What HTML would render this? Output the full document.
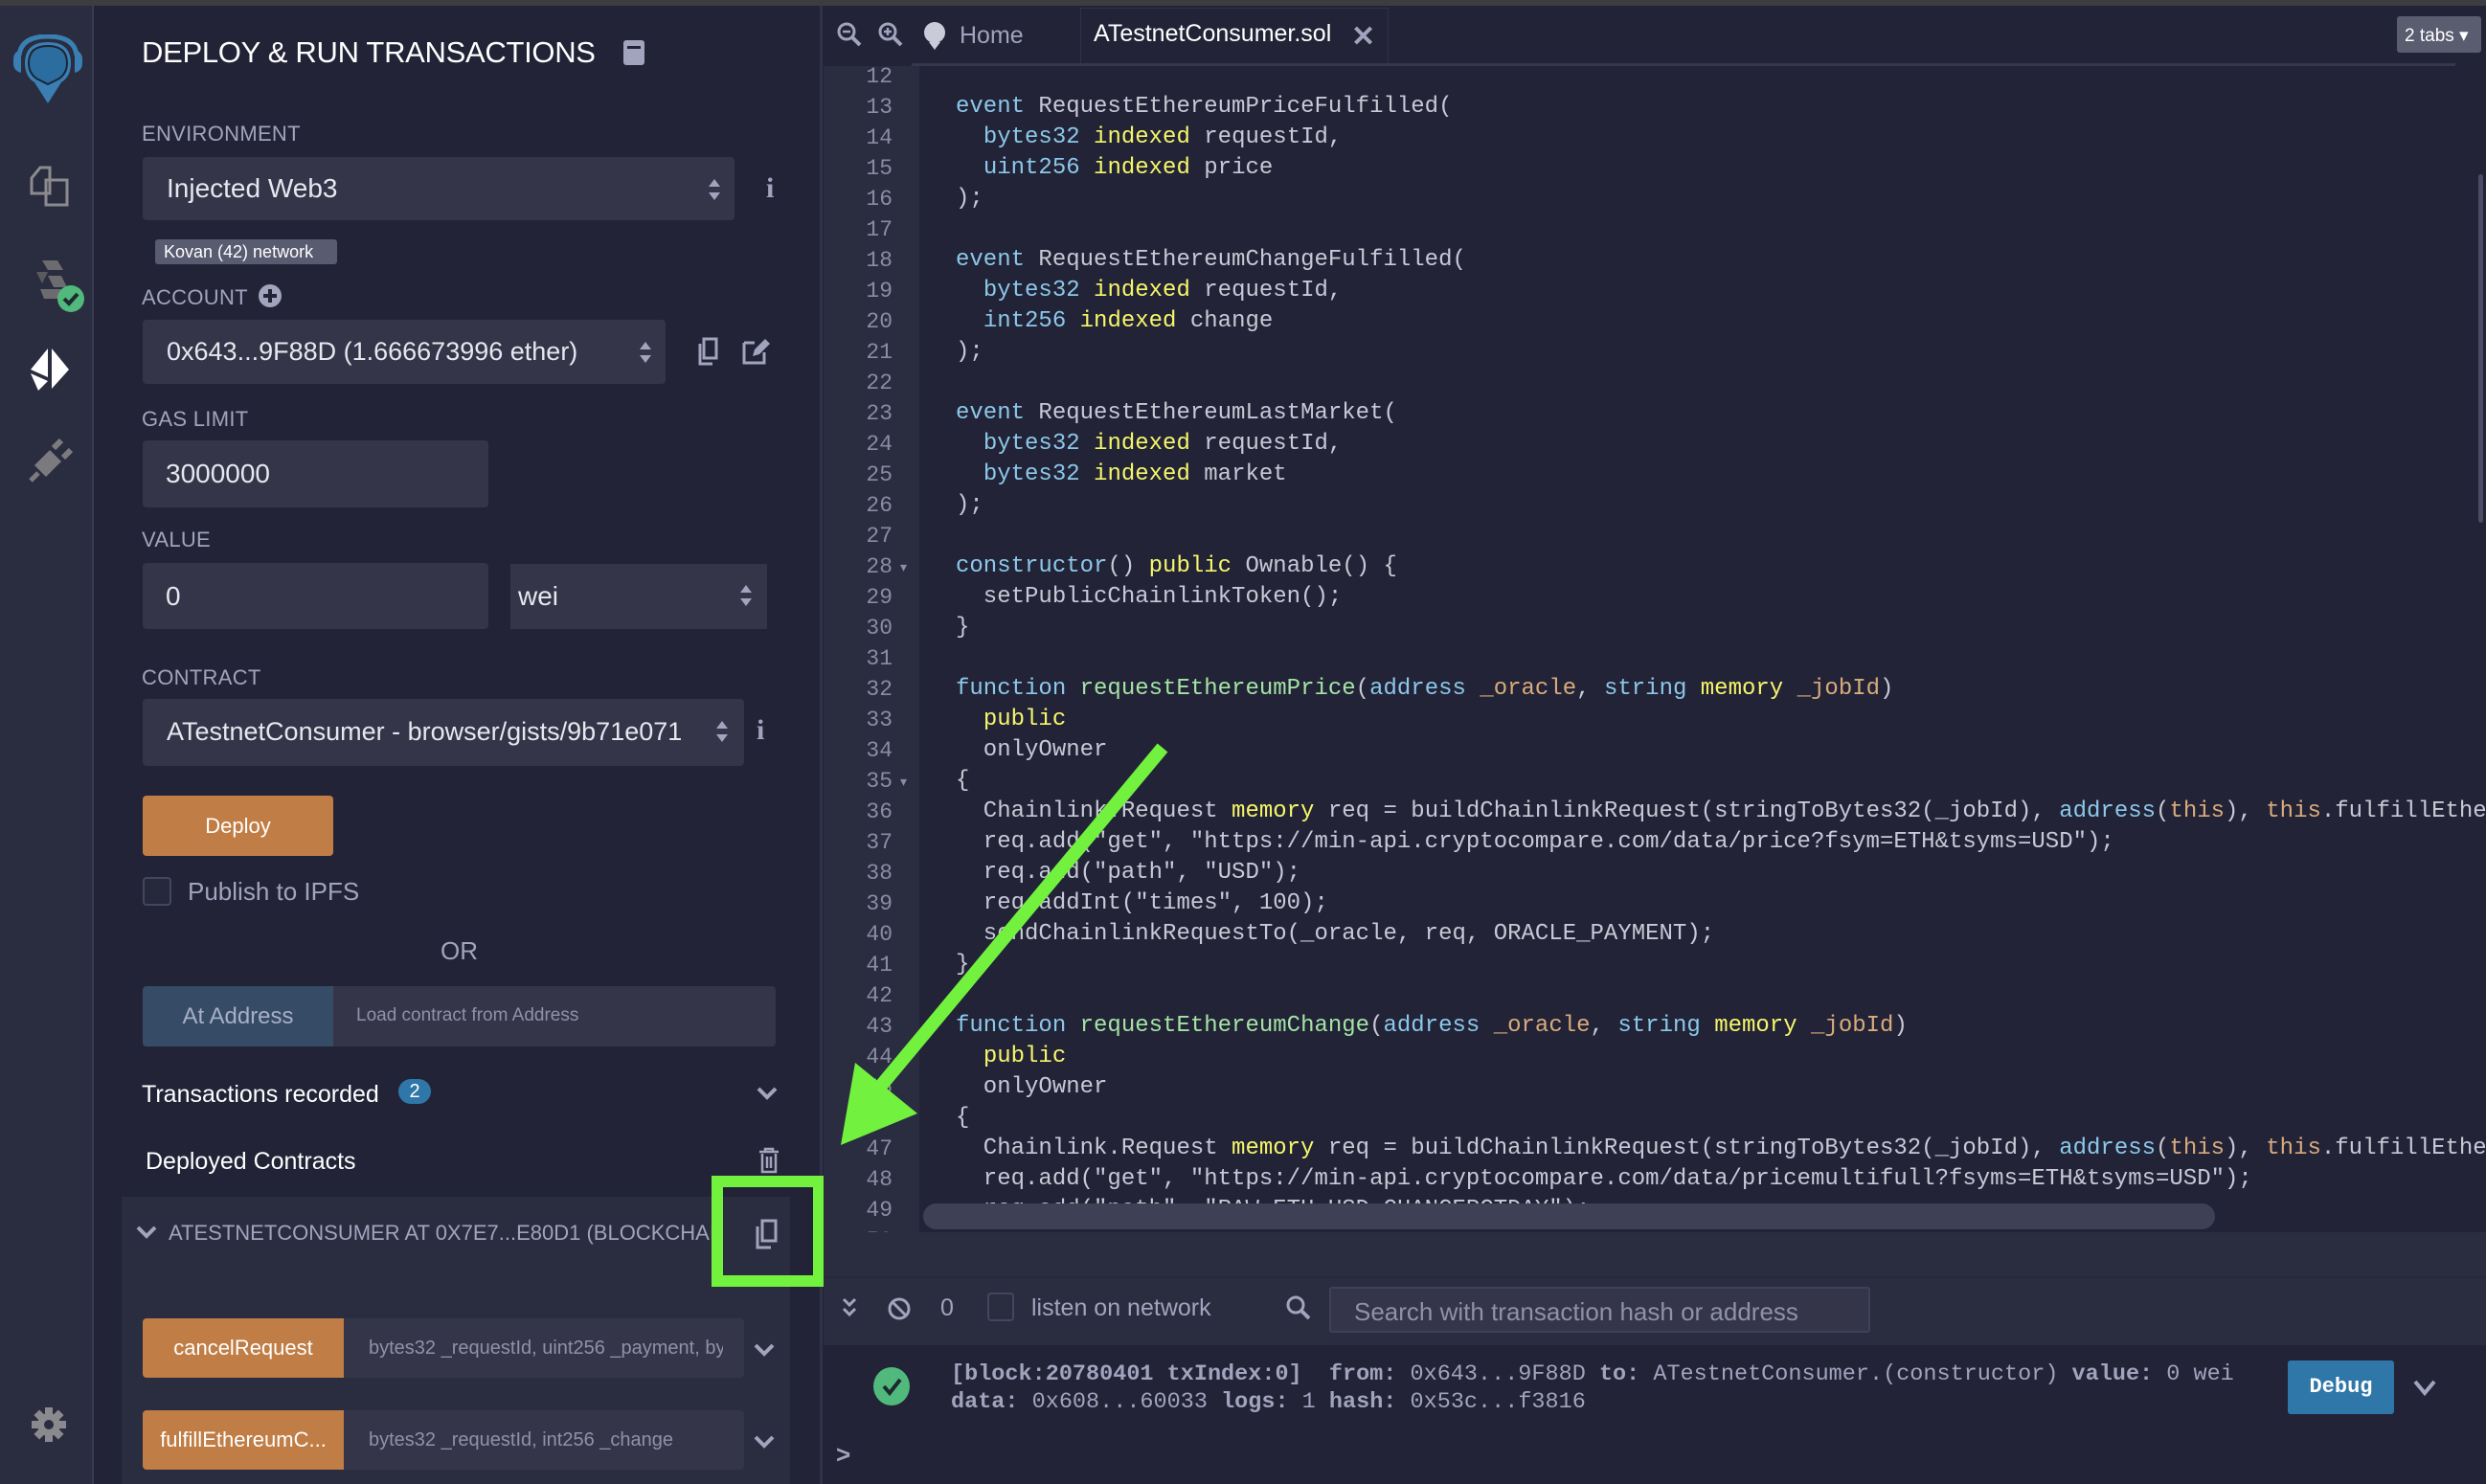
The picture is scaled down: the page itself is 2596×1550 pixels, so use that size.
<!DOCTYPE html>
<html><head><meta charset="utf-8"><style>
*{margin:0;padding:0;box-sizing:border-box}
body{width:2596px;height:1550px;overflow:hidden;background:#222336;font-family:"Liberation Sans",sans-serif;position:relative;color:#c9cbd8}
.a{position:absolute}
.lbl{position:absolute;left:148px;font-size:22px;color:#a2a3bd;letter-spacing:0.3px}
.box{position:absolute;background:#353549;border-radius:4px;color:#e6e7ef;font-size:28px;line-height:1}
.code{position:absolute;left:138px;top:0;font-family:"Liberation Mono",monospace;font-size:24px;color:#c7c9d6;white-space:pre}
.ln{position:absolute;left:0;width:72px;text-align:right;font-family:"Liberation Mono",monospace;font-size:23px;color:#8a8ca3}
.k{color:#8cc8ea}.y{color:#f6f66a}.g{color:#a4e3a6}.o{color:#d8ab7c}
.btn{position:absolute;background:#c07d45;color:#fff;font-size:22px;text-align:center;border-radius:4px}
</style></head><body>
<div class="a" style="left:0;top:0;width:2596px;height:6px;background:#3d3d40"></div>
<div class="a" style="left:0;top:6px;width:98px;height:1544px;background:#2a2c3f;border-right:2px solid #3a3c52"></div>
<svg class="a" style="left:6px;top:36px" width="88" height="76" viewBox="0 0 88 76">
<path d="M8 26 Q8 18 16 16 L16 40 Q8 38 8 30Z" fill="#3a7fb3"/><path d="M80 26 Q80 18 72 16 L72 40 Q80 38 80 30Z" fill="#3a7fb3"/>
<path d="M14 22 Q16 2 44 2 Q72 2 74 22" stroke="#3a7fb3" stroke-width="5" fill="none"/>
<path d="M20 30 Q20 8 44 8 Q68 8 68 30 Q68 44 58 50 L44 72 L30 50 Q20 44 20 30Z" fill="#3a7fb3"/>
<path d="M24 30 Q24 12 44 12 Q64 12 64 30 Q64 40 56 46 L44 52 L32 46 Q24 40 24 30Z" fill="#2a6d9e" stroke="#1e2536" stroke-width="2"/>
</svg>
<svg class="a" style="left:30px;top:172px" width="42" height="44" viewBox="0 0 42 44"><path d="M3 14 L12 3 L22 3 L22 30 L3 30Z M18 16 L28 16 L40 16 L40 42 L18 42Z" fill="none" stroke="#8b8b8f" stroke-width="3"/></svg>
<svg class="a" style="left:36px;top:268px" width="56" height="60" viewBox="0 0 56 60"><path d="M8 4 L24 4 L30 14 L14 14Z" fill="#6c6c70"/><path d="M2 16 L14 16 L8 28Z" fill="#5a5a5e"/><path d="M14 20 L28 20 L34 32 L20 32Z" fill="#6c6c70"/><path d="M6 34 L30 34 L24 44 L10 44Z" fill="#6c6c70"/><circle cx="38" cy="44" r="14" fill="#51b97c"/><path d="M31 44 L36 49 L45 39" stroke="#1c2a30" stroke-width="4" fill="none"/></svg>
<svg class="a" style="left:30px;top:362px" width="44" height="48" viewBox="0 0 44 48"><path d="M20 2 L2 24 L20 32Z" fill="#fff"/><path d="M24 2 L42 24 L24 44Z" fill="#fff"/><path d="M2 28 L20 36 L10 46Z" fill="#fff"/></svg>
<svg class="a" style="left:30px;top:458px" width="46" height="46" viewBox="0 0 46 46"><path d="M6 28 L22 12 L34 24 L18 40Z" fill="#7b7b7f"/><path d="M26 10 L34 2 M36 20 L44 12" stroke="#7b7b7f" stroke-width="6"/><path d="M10 36 L2 44" stroke="#7b7b7f" stroke-width="5"/></svg>
<svg class="a" style="left:32px;top:1469px" width="38" height="38" viewBox="0 0 38 38"><g fill="#8a8a8e"><circle cx="19" cy="19" r="12"/><rect x="15" y="1" width="8" height="36"/><rect x="1" y="15" width="36" height="8"/><rect x="15" y="1" width="8" height="36" transform="rotate(45 19 19)"/><rect x="15" y="1" width="8" height="36" transform="rotate(-45 19 19)"/></g><circle cx="19" cy="19" r="5" fill="#2a2c3f"/></svg>

<div class="a" style="left:856px;top:6px;width:3px;height:1544px;background:#30324a"></div>
<div class="a" style="left:148px;top:37px;font-size:31px;color:#fff;letter-spacing:-0.3px">DEPLOY &amp; RUN TRANSACTIONS</div>
<div class="a" style="left:651px;top:42px;width:22px;height:26px;background:#a2a3bd;border-radius:3px"></div>
<div class="a" style="left:655px;top:48px;width:14px;height:3px;background:#222336"></div>
<div class="lbl" style="top:127px">ENVIRONMENT</div>
<div class="box" style="left:149px;top:164px;width:618px;height:66px;padding:19px 0 0 25px">Injected Web3</div>
<svg class="a" style="left:738px;top:184px" width="16" height="28"><path d="M2 11 L8 3 L14 11Z M2 17 L8 25 L14 17Z" fill="#a2a3bd"/></svg>
<div class="a" style="left:800px;top:180px;font-size:30px;font-weight:bold;color:#a2a3bd;font-family:'Liberation Serif',serif">i</div>
<div class="a" style="left:162px;top:250px;width:190px;height:26px;background:#595b70;border-radius:3px;color:#fff;font-size:18px;padding:3px 0 0 9px">Kovan (42) network</div>
<div class="lbl" style="top:298px">ACCOUNT</div>
<div class="a" style="left:270px;top:297px;width:24px;height:24px;border-radius:50%;background:#a2a3bd"></div>
<div class="a" style="left:280px;top:302px;width:4px;height:14px;background:#222336"></div><div class="a" style="left:275px;top:307px;width:14px;height:4px;background:#222336"></div>
<div class="box" style="left:149px;top:334px;width:546px;height:67px;padding:20px 0 0 25px;font-size:27px">0x643...9F88D (1.666673996 ether)</div>
<svg class="a" style="left:666px;top:354px" width="16" height="28"><path d="M2 11 L8 3 L14 11Z M2 17 L8 25 L14 17Z" fill="#a2a3bd"/></svg>
<svg class="a" style="left:728px;top:352px" width="24" height="30"><path d="M7 2 H20 V22 H7Z M3 7 V28 H16" fill="none" stroke="#a2a3bd" stroke-width="3"/></svg>
<svg class="a" style="left:774px;top:352px" width="30" height="30"><path d="M3 6 H14 M3 6 V27 H24 V16" fill="none" stroke="#a2a3bd" stroke-width="3"/><path d="M12 20 L14 13 L25 2 L30 7 L19 18Z" fill="#a2a3bd"/></svg>
<div class="lbl" style="top:425px">GAS LIMIT</div>
<div class="box" style="left:149px;top:460px;width:361px;height:70px;padding:21px 0 0 24px">3000000</div>
<div class="lbl" style="top:551px">VALUE</div>
<div class="box" style="left:149px;top:588px;width:361px;height:69px;padding:21px 0 0 24px">0</div>
<div class="box" style="left:533px;top:589px;width:268px;height:68px;padding:20px 0 0 8px;border-radius:0">wei</div>
<svg class="a" style="left:771px;top:608px" width="16" height="28"><path d="M2 11 L8 3 L14 11Z M2 17 L8 25 L14 17Z" fill="#a2a3bd"/></svg>
<div class="lbl" style="top:695px">CONTRACT</div>
<div class="box" style="left:149px;top:730px;width:628px;height:70px;padding:21px 0 0 25px;font-size:27px;white-space:nowrap;overflow:hidden">ATestnetConsumer - browser/gists/9b71e071</div>
<svg class="a" style="left:746px;top:750px" width="16" height="28"><path d="M2 11 L8 3 L14 11Z M2 17 L8 25 L14 17Z" fill="#a2a3bd"/></svg>
<div class="a" style="left:790px;top:746px;font-size:30px;font-weight:bold;color:#a2a3bd;font-family:'Liberation Serif',serif">i</div>
<div class="btn" style="left:149px;top:831px;width:199px;height:63px;line-height:63px">Deploy</div>
<div class="a" style="left:149px;top:916px;width:30px;height:30px;border:2px solid #44465c;border-radius:4px;background:#26283b"></div>
<div class="a" style="left:196px;top:916px;font-size:26px;color:#a2a3bd">Publish to IPFS</div>
<div class="a" style="left:460px;top:978px;font-size:26px;color:#a2a3bd">OR</div>
<div class="a" style="left:149px;top:1030px;width:661px;height:63px;background:#353549;border-radius:4px"></div>
<div class="a" style="left:149px;top:1030px;width:199px;height:63px;background:#364c66;border-radius:4px 0 0 4px;color:#a7aec6;font-size:24px;text-align:center;line-height:63px">At Address</div>
<div class="a" style="left:372px;top:1050px;font-size:19px;color:#8f91a8">Load contract from Address</div>
<div class="a" style="left:148px;top:1129px;font-size:25px;color:#fff">Transactions recorded</div>
<div class="a" style="left:416px;top:1127px;width:34px;height:26px;border-radius:13px;background:#2f77a8;color:#fff;font-size:20px;text-align:center;line-height:26px">2</div>
<svg class="a" style="left:790px;top:1134px" width="22" height="16"><path d="M2 3 L11 12 L20 3" stroke="#a2a3bd" stroke-width="4" fill="none"/></svg>
<div class="a" style="left:152px;top:1199px;font-size:25px;color:#fff">Deployed Contracts</div>
<svg class="a" style="left:792px;top:1198px" width="22" height="28"><path d="M1 5 H21 M7 5 V2 H15 V5 M4 7 V26 H18 V7 M9 10 V22 M13 10 V22" stroke="#a2a3bd" stroke-width="2.5" fill="none"/></svg>
<div class="a" style="left:127px;top:1250px;width:698px;height:300px;background:#2a2c3f"></div>
<svg class="a" style="left:142px;top:1279px" width="22" height="16"><path d="M2 3 L11 12 L20 3" stroke="#a2a3bd" stroke-width="4" fill="none"/></svg>
<div class="a" style="left:176px;top:1275px;font-size:22px;color:#a2a3bd;white-space:nowrap;width:573px;overflow:hidden">ATESTNETCONSUMER AT 0X7E7...E80D1 (BLOCKCHAIN)</div>
<svg class="a" style="left:788px;top:1273px" width="26" height="32"><path d="M8 2 H22 V23 H8Z M3 8 V30 H17" fill="none" stroke="#a2a3bd" stroke-width="3"/></svg>
<div class="a" style="left:743px;top:1228px;width:118px;height:116px;border:12px solid #73f13f"></div>
<div class="a" style="left:149px;top:1377px;width:628px;height:62px;background:#353549;border-radius:4px"></div>
<div class="btn" style="left:149px;top:1377px;width:210px;height:62px;line-height:62px;border-radius:4px 0 0 4px">cancelRequest</div>
<div class="a" style="left:385px;top:1397px;font-size:20px;color:#8f91a8;white-space:nowrap;width:370px;overflow:hidden">bytes32 _requestId, uint256 _payment, bytes4</div>
<svg class="a" style="left:787px;top:1402px" width="22" height="16"><path d="M2 3 L11 12 L20 3" stroke="#a2a3bd" stroke-width="4" fill="none"/></svg>
<div class="a" style="left:149px;top:1473px;width:628px;height:62px;background:#353549;border-radius:4px"></div>
<div class="btn" style="left:149px;top:1473px;width:210px;height:62px;line-height:62px;border-radius:4px 0 0 4px">fulfillEthereumC...</div>
<div class="a" style="left:385px;top:1493px;font-size:20px;color:#8f91a8">bytes32 _requestId, int256 _change</div>
<svg class="a" style="left:787px;top:1498px" width="22" height="16"><path d="M2 3 L11 12 L20 3" stroke="#a2a3bd" stroke-width="4" fill="none"/></svg>

<svg class="a" style="left:873px;top:22px" width="30" height="30"><circle cx="11" cy="11" r="8" stroke="#a2a3bd" stroke-width="3" fill="none"/><path d="M17 17 L25 25" stroke="#a2a3bd" stroke-width="4"/><path d="M7 11 H15" stroke="#a2a3bd" stroke-width="2.5"/></svg>
<svg class="a" style="left:916px;top:22px" width="30" height="30"><circle cx="11" cy="11" r="8" stroke="#a2a3bd" stroke-width="3" fill="none"/><path d="M17 17 L25 25" stroke="#a2a3bd" stroke-width="4"/><path d="M7 11 H15 M11 7 V15" stroke="#a2a3bd" stroke-width="2.5"/></svg>
<svg class="a" style="left:960px;top:20px" width="32" height="34"><circle cx="16" cy="14" r="11" fill="#c9cbd8"/><path d="M10 24 L16 32 L22 24Z" fill="#c9cbd8"/></svg>
<div class="a" style="left:1002px;top:23px;font-size:25px;color:#a2a3bd">Home</div>
<div class="a" style="left:1128px;top:8px;width:322px;height:60px;border:1px solid #30324a;border-bottom:none;background:#222336"></div>
<div class="a" style="left:1142px;top:21px;font-size:25px;color:#fff">ATestnetConsumer.sol</div>
<div class="a" style="left:1411px;top:21px;font-size:30px;color:#a2a3bd;font-weight:bold">✕</div>
<div class="a" style="left:952px;top:66px;width:1612px;height:3px;background:#35374d"></div>
<div class="a" style="left:2503px;top:17px;width:88px;height:38px;background:#5a5c70;border-radius:3px;color:#fff;font-size:19px;padding:9px 0 0 8px">2 tabs ▾</div>
<div class="a" style="left:860px;top:69px;width:100px;height:1218px;background:#2a2c3f"></div>
<div class="a" style="left:2588px;top:182px;width:5px;height:364px;background:#4a4c62;border-radius:3px"></div>
<div class="a" style="left:860px;top:69px;width:1736px;height:1218px;overflow:hidden">
<div class="a" style="left:0;top:-5px;width:1736px;height:1300px">
<div class="ln" style="top:0;line-height:32px">12<br>13<br>14<br>15<br>16<br>17<br>18<br>19<br>20<br>21<br>22<br>23<br>24<br>25<br>26<br>27<br>28<br>29<br>30<br>31<br>32<br>33<br>34<br>35<br>36<br>37<br>38<br>39<br>40<br>41<br>42<br>43<br>44<br>45<br>46<br>47<br>48<br>49<br>50</div>
<div class="a" style="left:80px;top:520px;font-size:14px;color:#8a8ca3">▾</div>
<div class="a" style="left:80px;top:744px;font-size:14px;color:#8a8ca3">▾</div>
<div class="code" style="top:0;line-height:32px">
<span class="k">event</span> RequestEthereumPriceFulfilled(
  <span class="k">bytes32</span> <span class="y">indexed</span> requestId,
  <span class="k">uint256</span> <span class="y">indexed</span> price
);

<span class="k">event</span> RequestEthereumChangeFulfilled(
  <span class="k">bytes32</span> <span class="y">indexed</span> requestId,
  <span class="k">int256</span> <span class="y">indexed</span> change
);

<span class="k">event</span> RequestEthereumLastMarket(
  <span class="k">bytes32</span> <span class="y">indexed</span> requestId,
  <span class="k">bytes32</span> <span class="y">indexed</span> market
);

<span class="k">constructor</span>() <span class="y">public</span> Ownable() {
  setPublicChainlinkToken();
}

<span class="k">function</span> <span class="g">requestEthereumPrice</span>(<span class="k">address</span> <span class="o">_oracle</span>, <span class="k">string</span> <span class="y">memory</span> <span class="o">_jobId</span>)
  <span class="y">public</span>
  onlyOwner
{
  Chainlink.Request <span class="y">memory</span> req = buildChainlinkRequest(stringToBytes32(_jobId), <span class="k">address</span>(<span class="o">this</span>), <span class="o">this</span>.fulfillEthereumPrice.selector);
  req.add("get", "https://min-api.cryptocompare.com/data/price?fsym=ETH&amp;tsyms=USD");
  req.add("path", "USD");
  req.addInt("times", 100);
  sendChainlinkRequestTo(_oracle, req, ORACLE_PAYMENT);
}

<span class="k">function</span> <span class="g">requestEthereumChange</span>(<span class="k">address</span> <span class="o">_oracle</span>, <span class="k">string</span> <span class="y">memory</span> <span class="o">_jobId</span>)
  <span class="y">public</span>
  onlyOwner
{
  Chainlink.Request <span class="y">memory</span> req = buildChainlinkRequest(stringToBytes32(_jobId), <span class="k">address</span>(<span class="o">this</span>), <span class="o">this</span>.fulfillEthereumChange.selector);
  req.add("get", "https://min-api.cryptocompare.com/data/pricemultifull?fsyms=ETH&amp;tsyms=USD");
  req.add("path", "RAW.ETH.USD.CHANGEPCTDAY");
</div>
</div>
</div>
<div class="a" style="left:964px;top:1257px;width:1349px;height:27px;background:#3e4056;border-radius:14px"></div>
<div class="a" style="left:860px;top:1287px;width:1736px;height:46px;background:#2a2c3f"></div>
<div class="a" style="left:860px;top:1333px;width:1736px;height:72px;background:#2a2c3f;border-top:2px solid #26283a"></div>
<svg class="a" style="left:878px;top:1354px" width="18" height="24"><path d="M3 3 L9 9 L15 3 M3 13 L9 19 L15 13" stroke="#a2a3bd" stroke-width="3" fill="none"/></svg>
<svg class="a" style="left:926px;top:1354px" width="26" height="26"><circle cx="13" cy="13" r="10" stroke="#a2a3bd" stroke-width="3" fill="none"/><path d="M6 6 L20 20" stroke="#a2a3bd" stroke-width="3"/></svg>
<div class="a" style="left:982px;top:1352px;font-size:25px;color:#a2a3bd">0</div>
<div class="a" style="left:1031px;top:1350px;width:28px;height:30px;border:2px solid #44465c;border-radius:4px"></div>
<div class="a" style="left:1077px;top:1352px;font-size:25px;color:#a2a3bd">listen on network</div>
<svg class="a" style="left:1342px;top:1352px" width="28" height="28"><circle cx="11" cy="11" r="8" stroke="#a2a3bd" stroke-width="3" fill="none"/><path d="M17 17 L25 25" stroke="#a2a3bd" stroke-width="4"/></svg>
<div class="a" style="left:1388px;top:1344px;width:565px;height:48px;background:#353549;border:2px solid #3f4157;border-radius:3px;color:#8f91a8;font-size:26px;padding:9px 0 0 24px">Search with transaction hash or address</div>
<div class="a" style="left:912px;top:1428px;width:38px;height:40px;border-radius:50%;background:#51b97c"></div>
<svg class="a" style="left:912px;top:1428px" width="38" height="40"><path d="M11 20 L17 27 L28 13" stroke="#1c2a30" stroke-width="4" fill="none"/></svg>
<div class="a" style="left:993px;top:1421px;font-family:'Liberation Mono',monospace;font-size:23.5px;color:#a2a3bd;line-height:29px;white-space:pre"><b>[block:20780401 txIndex:0]  from:</b> 0x643...9F88D <b>to:</b> ATestnetConsumer.(constructor) <b>value:</b> 0 wei
<b>data:</b> 0x608...60033 <b>logs:</b> 1 <b>hash:</b> 0x53c...f3816</div>
<div class="a" style="left:2389px;top:1421px;width:111px;height:56px;background:#2f77a8;border-radius:3px;color:#fff;font-family:'Liberation Mono',monospace;font-weight:bold;font-size:22px;text-align:center;line-height:56px">Debug</div>
<svg class="a" style="left:2520px;top:1440px" width="24" height="20"><path d="M2 3 L12 15 L22 3" stroke="#a2a3bd" stroke-width="4" fill="none"/></svg>
<div class="a" style="left:873px;top:1504px;font-size:26px;color:#a2a3bd;font-weight:bold">&gt;</div>
<svg class="a" style="left:0;top:0" width="2596" height="1550"><path d="M1214 781 L915 1140" stroke="#73f13f" stroke-width="14"/><path d="M878 1196 L893 1110 L958 1163Z" fill="#73f13f"/></svg>
</body></html>
